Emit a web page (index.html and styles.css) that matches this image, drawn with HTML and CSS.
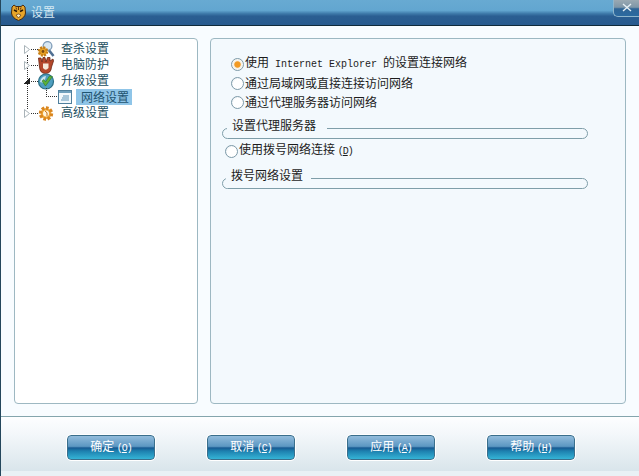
FILE: index.html
```html
<!DOCTYPE html>
<html lang="zh-CN">
<head>
    <meta charset="UTF-8">
    <title>设置</title>
    <link rel="stylesheet" href="styles.css">
</head>
<body>
    <div class="window">
        <div class="titlebar">
            <svg class="logo" width="15" height="17" viewBox="0 0 15 17">
                <path d="M1 3 L3 1 L5 2.5 H10 L12 1 L14 3 L14.5 9 Q14 14 7.5 16.5 Q1 14 .5 9 Z" fill="#e7a52a" stroke="#4a2c10"/>
                <path d="M3 6 L6 7.5 M12 6 L9 7.5" stroke="#2b1a08" stroke-width="1.6"/>
                <path d="M7.5 3 V6 M5 3.5 L5.6 5.5 M10 3.5 L9.4 5.5" stroke="#5c3410"/>
                <path d="M5 11 Q7.5 9 10 11 L7.5 14 Z" fill="#fbeec8" stroke="#5c3410" stroke-width=".7"/>
            </svg>
            <span class="title">设置</span>
            <span class="close">
                <svg width="10" height="9" viewBox="0 0 10 9"><path d="M1 1 L9 8 M9 1 L1 8" stroke="#e6eff4" stroke-width="1.4"/></svg>
            </span>
        </div>

        <div class="content">
            <div class="panel tree">
                <span class="tree-line"></span>
                <div class="node">
                    <svg class="arrow" width="6" height="9" viewBox="0 0 6 9"><path d="M.5 .5 L5.5 4.5 L.5 8.5 Z" fill="#fff" stroke="#a9b3b8"/></svg>
                    <span class="dash"></span>
                    <svg class="icon" width="18" height="17" viewBox="0 0 18 17">
                        <path d="M11 8 L16.5 15" stroke="#4f6f92" stroke-width="2.6"/>
                        <circle cx="10.5" cy="5" r="4.4" fill="#d9e8f3" stroke="#7f9cb8" stroke-width="1.3"/>
                        <circle cx="6" cy="10.5" r="4" fill="#e8a326" stroke="#c67e16" stroke-width="2.6" stroke-dasharray="2 1.1"/>
                        <circle cx="6" cy="10.5" r="1.4" fill="#7a4a10"/>
                    </svg>
                    <span class="label">查杀设置</span>
                </div>
                <div class="node">
                    <svg class="arrow" width="6" height="9" viewBox="0 0 6 9"><path d="M.5 .5 L5.5 4.5 L.5 8.5 Z" fill="#fff" stroke="#a9b3b8"/></svg>
                    <span class="dash"></span>
                    <svg class="icon" width="18" height="17" viewBox="0 0 18 17">
                        <path d="M1.5 1 L4 1 L5 5 L6 .5 L8 .5 L9 5 L10.5 .5 L13 .5 L13 4 L16 2 L16.5 4 L14.5 10 Q14 16.5 8.5 16.5 Q3 16.5 2.5 10 Z" fill="#b4482b" stroke="#6b2412" stroke-width=".8"/>
                        <path d="M6 6.5 H11.5 V11 Q8.7 14.5 6 11 Z" fill="#f6ead9"/>
                    </svg>
                    <span class="label">电脑防护</span>
                </div>
                <div class="node">
                    <span class="arrow-open"></span><span class="dash"></span>
                    <svg class="icon" width="18" height="17" viewBox="0 0 18 17">
                        <circle cx="9" cy="8.5" r="7.5" fill="#4f9fc0" stroke="#2c6f86" stroke-width="1.2"/>
                        <path d="M3 9 Q4 3.5 9 3 L7 10 Z" fill="#cbe4ee"/>
                        <path d="M5 8 L8.5 13 L15.5 3.5 L12.5 3 L8.5 9 L7 6.5 Z" fill="#5cb03c" stroke="#2f7a24" stroke-width=".6"/>
                    </svg>
                    <span class="label">升级设置</span>
                </div>
                <div class="node child">
                    <span class="child-line"></span>
                    <svg class="icon-doc" width="14" height="14" viewBox="0 0 14 14">
                        <rect x=".5" y=".5" width="13" height="13" fill="#f2f8fc" stroke="#4f7f9c"/>
                        <rect x="1" y="1" width="12" height="2" fill="#6f9fbc"/>
                        <path d="M5 6 H11 M4 8 H11 M3 10 H11" stroke="#5f95b8"/>
                    </svg>
                    <span class="label selected">网络设置</span>
                </div>
                <div class="node">
                    <svg class="arrow" width="6" height="9" viewBox="0 0 6 9"><path d="M.5 .5 L5.5 4.5 L.5 8.5 Z" fill="#fff" stroke="#a9b3b8"/></svg>
                    <span class="dash"></span>
                    <svg class="icon" width="18" height="17" viewBox="0 0 18 17">
                        <circle cx="9" cy="8.5" r="5.5" fill="#f0a93a" stroke="#d9851f" stroke-width="3.4" stroke-dasharray="2.6 1.6"/>
                        <circle cx="9" cy="8.5" r="3" fill="#fff4dc"/>
                        <path d="M8 6 Q11 7 10 11" stroke="#c46f14" fill="none"/>
                    </svg>
                    <span class="label">高级设置</span>
                </div>
            </div>

            <div class="panel pane">
                <div class="options">
                    <label class="option"><span class="radio checked"></span><span>使用<span class="latin"> Internet Explorer </span>的设置连接网络</span></label>
                    <label class="option"><span class="radio"></span><span>通过局域网或直接连接访问网络</span></label>
                    <label class="option"><span class="radio"></span><span>通过代理服务器访问网络</span></label>
                </div>
                <fieldset class="group">
                    <legend>设置代理服务器</legend>
                </fieldset>
                <label class="option dial"><span class="radio"></span><span>使用拨号网络连接 <span class="key">(<u>D</u>)</span></span></label>
                <fieldset class="group second">
                    <legend>拨号网络设置</legend>
                </fieldset>
            </div>
        </div>

        <div class="footer">
            <button>确定 <span class="key">(<u>O</u>)</span></button>
            <button>取消 <span class="key">(<u>C</u>)</span></button>
            <button>应用 <span class="key">(<u>A</u>)</span></button>
            <button>帮助 <span class="key">(<u>H</u>)</span></button>
        </div>
    </div>
</body>
</html>
```

FILE: styles.css
```css
* {
    box-sizing: border-box;
}

body {
    margin: 0;
    font-family: "Noto Sans CJK SC", "Liberation Sans", sans-serif;
    font-size: 12px;
    line-height: 16px;
    background: #f8fcff;
}

.window {
    display: flex;
    flex-direction: column;
    width: 639px;
    height: 476px;
    overflow: hidden;
    background: #f8fcff;
    border-left: 1px solid #24475c;
}

.latin {
    font-family: "Liberation Mono", monospace;
    font-size: 10px;
}

.key {
    font-family: "Liberation Mono", monospace;
    font-size: 10px;
    letter-spacing: -1px;
}

/* Title bar */
.titlebar {
    display: flex;
    align-items: center;
    flex: none;
    height: 26px;
    padding: 0 0 2px 10px;
    background: linear-gradient(#68aad2 0, #62a6d0 40%, #3f7bab 52%, #2a5e92 62%, #285a8e 96%, #0f2a3a 96%);
}

.logo {
    flex: none;
}

.title {
    margin-left: 5px;
    color: #d5e9f3;
    font-size: 12px;
}

.close {
    display: flex;
    align-items: center;
    justify-content: center;
    width: 26px;
    height: 17px;
    margin: -8px 0 0 auto;
    border: 1px solid #8fb6cc;
    border-top: none;
    border-right: none;
    border-radius: 0 0 0 5px;
    background: linear-gradient(#9aa9b2 0, #7f97a8 45%, #2f6596 55%, #2c6aa0 100%);
}

/* Panels */
.content {
    display: flex;
    flex: 1;
    gap: 12px;
    padding: 12px 13px 12px 13px;
    border-bottom: 1px solid #84a5ad;
}

.panel {
    border: 1px solid #9db8c2;
    border-radius: 4px;
}

.tree {
    position: relative;
    width: 184px;
    padding-top: 2px;
    background: #fff;
    color: #23505f;
}

.tree-line {
    position: absolute;
    left: 12px;
    top: 16px;
    height: 54px;
    border-left: 1px dotted #333;
}

.node {
    position: relative;
    display: flex;
    align-items: center;
    height: 16px;
    padding-left: 9px;
}

.arrow {
    flex: none;
}

.arrow-open {
    flex: none;
    width: 6px;
    height: 6px;
    background: linear-gradient(to bottom right, transparent 50%, #222 50%);
}

.dash {
    flex: none;
    width: 7px;
    margin-left: 1px;
    border-top: 1px dotted #333;
}

.icon {
    flex: none;
    margin-left: -1px;
}

.label {
    margin: 0 0 2px 6px;
}

.child {
    padding-left: 43px;
}

.child-line {
    position: absolute;
    left: 31px;
    top: -1px;
    width: 11px;
    height: 9px;
    border-left: 1px dotted #333;
    border-bottom: 1px dotted #333;
}

.icon-doc {
    flex: none;
}

.label.selected {
    align-self: flex-start;
    margin: 0 0 0 4px;
    padding: 0 3px 0 5px;
    background: #8fc5e8;
    color: #1f5470;
}

/* Right pane */
.pane {
    width: 416px;
    padding: 16px 37px 0 11px;
    background: #f3f9fd;
    color: #1c1c1c;
}

.options {
    padding-left: 9px;
}

.option {
    display: flex;
    align-items: center;
    gap: 1px;
    height: 19px;
    padding-bottom: 2px;
    white-space: pre;
}

.radio {
    flex: none;
    width: 13px;
    height: 13px;
    margin-top: 2px;
    border: 1px solid #7d9aa8;
    border-radius: 50%;
    background: radial-gradient(circle at 60% 60%, #fff 55%, #d5e2ea 100%);
}

.radio.checked {
    background: radial-gradient(circle, #f29a22 0, #f29a22 35%, #f6f1e6 48%, #fff 100%);
}

.group {
    height: 20px;
    margin: 6px 0 0;
    padding: 0;
    border: 1px solid #7f9ea9;
    border-radius: 6px;
}

.group legend {
    margin-left: 4px;
    padding: 0 11px 6px 5px;
    line-height: 14px;
}

.dial {
    margin: 3px 0 0 3px;
}

.second {
    margin-top: 7px;
}

.second legend {
    margin-left: 3px;
    padding-right: 8px;
}

/* Bottom buttons */
.footer {
    display: flex;
    flex: none;
    gap: 52px;
    height: 59px;
    padding: 18px 0 0 66px;
    background: linear-gradient(#fdfeff 0, #f3f7fa 30%, #d9e5eb 92%, #e9f1f5 92%);
}

button {
    width: 88px;
    height: 25px;
    padding: 0;
    border: 1px solid #3a6f8c;
    border-radius: 4px;
    outline: 1px solid #fff;
    background: linear-gradient(#92bcdc 0, #5c97c2 45%, #175a92 52%, #1d7fae 65%, #35b4d6 100%);
    color: #fff;
    font-family: inherit;
    font-size: 12px;
    line-height: 16px;
}
```
